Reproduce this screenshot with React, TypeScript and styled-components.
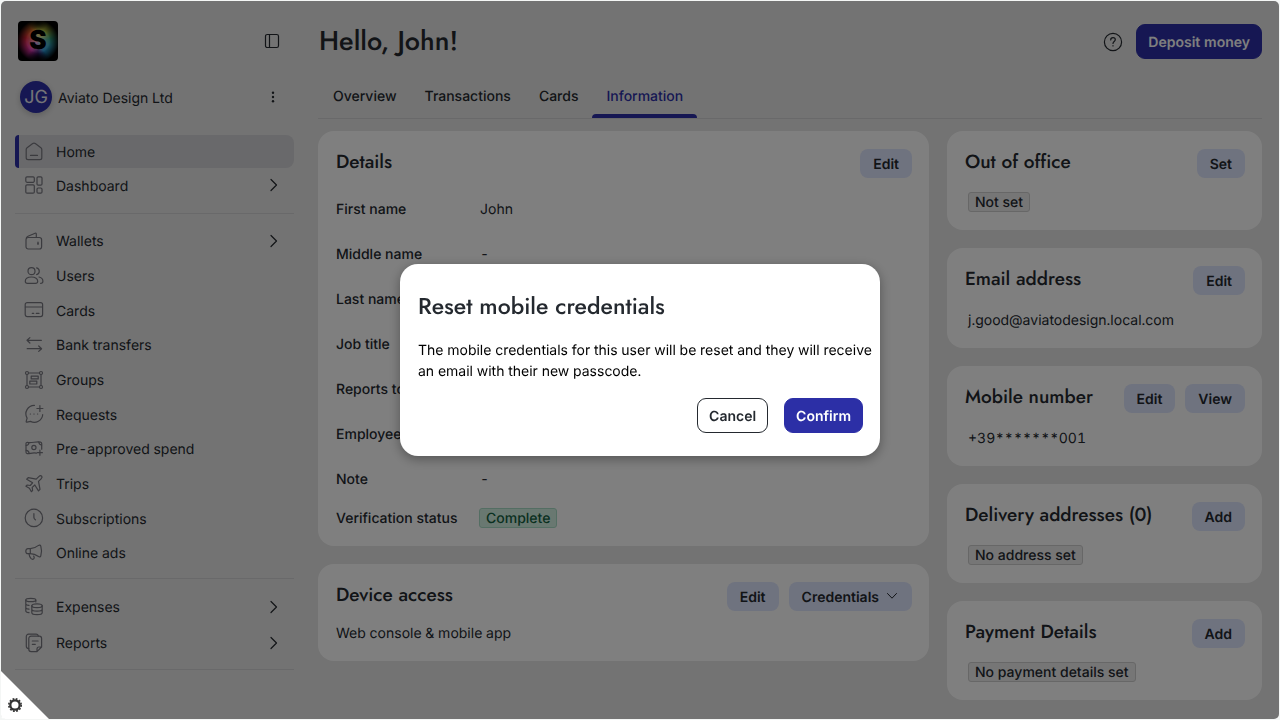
import React from "react";
import styled, { createGlobalStyle, css } from "styled-components";

const color = {
  ink: "#24292f",
  primary: "#2c2fa6",
  page: "#e7e7e7",
  card: "#ffffff",
  line: "#d2d2d4",
  soft: "#dfe6ff",
  icon: "#76767e",
};

const headingFont = `Jost, Futura, "Century Gothic", Lato, sans-serif`;

const GlobalStyle = createGlobalStyle`
  *, *::before, *::after { box-sizing: border-box; }
  body {
    margin: 0;
    background: #f4f6f5;
    color: ${color.ink};
    font-family: Inter, "Liberation Sans", sans-serif;
    font-size: 14px;
    line-height: 21px;
    font-variant-numeric: tabular-nums;
    text-rendering: geometricPrecision;
  }
  h1, h2, p, ul, dl, dd { margin: 0; padding: 0; }
  ul { list-style: none; }
  button { font: inherit; color: inherit; cursor: pointer; text-rendering: inherit; }
  a { color: inherit; text-decoration: none; }
`;

/* One line of body text, set low in its line box. */
const singleLine = css`
  padding-top: 2px;
  line-height: 19px;
`;

const Frame = styled.div`
  display: grid;
  grid-template-columns: 293px minmax(0, 1fr);
  column-gap: 24px;
  min-height: calc(100vh - 2px);
  margin: 1px;
  padding: 0 17px 0 0;
  border-radius: 5px;
  background: ${color.page};
`;

/* Sidebar */

const Sidebar = styled.aside`
  padding: 20px 0 0 14px;
`;

const BrandRow = styled.div`
  display: flex;
  align-items: center;
  justify-content: space-between;
  padding: 0 14px 0 3px;
`;

const Logo = styled.div`
  display: flex;
  align-items: center;
  justify-content: center;
  width: 40px;
  height: 40px;
  border-radius: 4px;
  color: #000;
  font-size: 26px;
  line-height: 40px;
  font-weight: 900;
  background:
    radial-gradient(circle at 50% 0%, #000 0%, transparent 22%),
    radial-gradient(circle at 50% 100%, #000 0%, transparent 26%),
    radial-gradient(circle at 50% 50%, transparent 40%, #000 74%),
    radial-gradient(circle at 50% 50%, rgba(255, 255, 255, 0.7) 0%, transparent 45%),
    conic-gradient(from 0deg, #c8c040, #a8b838 40deg, #30a080 80deg, #30a0b8 110deg, #2090d0 150deg, #50208c 180deg, #e030a8 220deg, #e02838 285deg, #e07028 330deg, #c8c040);
`;

const IconButton = styled.button`
  display: flex;
  padding: 0;
  border: 0;
  background: none;
`;

const AccountRow = styled.div`
  display: flex;
  align-items: center;
  gap: 6px;
  margin-top: 20px;
  padding: 0 14px 0 5px;
`;

const Avatar = styled.span`
  width: 32px;
  height: 32px;
  border-radius: 50%;
  background: ${color.primary};
  color: #e9e9ef;
  font-size: 18px;
  line-height: 33px;
  text-align: center;
  box-shadow: 0 2px 6px rgba(0, 0, 0, 0.2);
`;

const AccountName = styled.span`
  ${singleLine}
  flex: 1;
`;

const Nav = styled.nav`
  margin-top: 22px;
`;

const NavGroup = styled.ul<{ $height: number }>`
  display: flex;
  flex-direction: column;
  justify-content: space-between;
  min-height: ${(p) => p.$height}px;
`;

const Divider = styled.hr<{ $above: number; $below: number }>`
  height: 1px;
  margin: ${(p) => p.$above}px 0 ${(p) => p.$below}px;
  border: 0;
  background: ${color.line};
`;

const NavLink = styled.a<{ $active?: boolean; $tall?: boolean }>`
  display: flex;
  align-items: center;
  gap: 12px;
  height: ${(p) => (p.$tall ? 35 : 34)}px;
  padding: 0 14px 0 9px;
  ${(p) =>
    p.$active &&
    css`
      height: 33px;
      padding-left: 5px;
      border-left: 4px solid ${color.primary};
      border-radius: 4px 8px 8px 4px;
      background: #d3d3d6;
    `}
`;

const NavLabel = styled.span`
  ${singleLine}
  flex: 1;
`;

/* Main column */

const Main = styled.main`
  padding: 20px 0 18px;
`;

const PageHeader = styled.header`
  display: flex;
  align-items: center;
  justify-content: space-between;
  height: 41px;
`;

const PageTitle = styled.h1`
  padding: 0 0 1px 1px;
  font-family: ${headingFont};
  font-size: 27px;
  line-height: 39px;
  font-weight: 500;
`;

const HeaderActions = styled.div`
  display: flex;
  align-items: center;
  gap: 13px;
`;

const Button = styled.button<{ $kind?: "primary" | "outline" }>`
  height: 35px;
  padding: 1px 11px 0;
  border: 1px solid ${(p) => (p.$kind === "outline" ? color.ink : color.primary)};
  border-radius: 9px;
  background: ${(p) => (p.$kind === "outline" ? "#fff" : color.primary)};
  color: ${(p) => (p.$kind === "outline" ? color.ink : "#fff")};
  font-weight: 600;
`;

const SmallButton = styled.button`
  display: flex;
  align-items: center;
  gap: 6px;
  height: 29px;
  padding: 1px 13px 0;
  border: 0;
  border-radius: 8px;
  background: ${color.soft};
  font-weight: 600;
`;

const Tabs = styled.nav`
  display: flex;
  margin-top: 13px;
  padding-left: 1px;
  border-bottom: 1px solid ${color.line};
`;

const Tab = styled.a<{ $active?: boolean }>`
  position: relative;
  height: 43px;
  padding: 11px 14px 0;
  font-weight: 500;
  color: ${(p) => (p.$active ? color.primary : color.ink)};
  ${(p) =>
    p.$active &&
    css`
      &::after {
        content: "";
        position: absolute;
        inset: auto 0 0;
        height: 4px;
        border-radius: 4px 4px 0 0;
        background: ${color.primary};
      }
    `}
`;

const Content = styled.div`
  display: grid;
  grid-template-columns: minmax(0, 1fr) 315px;
  gap: 18px;
  align-items: start;
  margin-top: 12px;
`;

const Column = styled.div`
  display: grid;
  gap: 18px;
`;

const Card = styled.section<{ $tight?: boolean }>`
  padding: 18px 17px ${(p) => (p.$tight ? 12 : 18)}px 18px;
  border-radius: 16px;
  background: ${color.card};
`;

const CardHeader = styled.header`
  display: flex;
  align-items: center;
  justify-content: space-between;
  height: 29px;
`;

const CardTitle = styled.h2`
  padding-bottom: 1px;
  font-family: ${headingFont};
  font-size: 19px;
  line-height: 26px;
  font-weight: 500;
`;

const CardActions = styled.div`
  display: flex;
  gap: 10px;
`;

const CardBody = styled.div`
  margin-top: 14px;
  padding-left: 3px;
`;

const CardText = styled.p`
  ${singleLine}
`;

const DeviceText = styled.p`
  ${singleLine}
  margin-top: 11px;
`;

const Badge = styled.span<{ $good?: boolean }>`
  display: block;
  width: max-content;
  height: 20px;
  padding: 0 6px;
  border: 1px solid ${(p) => (p.$good ? "#a9dcc6" : "#cfcfcf")};
  border-radius: 3px;
  background: ${(p) => (p.$good ? "#d3f0e3" : "#ececec")};
  color: ${(p) => (p.$good ? "#146041" : color.ink)};
  line-height: 20px;
  font-weight: 500;
`;

const Fields = styled.dl`
  margin-top: 8px;
`;

const Field = styled.div<{ $short?: boolean }>`
  display: grid;
  grid-template-columns: 143px 1fr;
  align-items: center;
  height: ${(p) => (p.$short ? 33 : 45)}px;
`;

const FieldName = styled.dt`
  ${singleLine}
  font-weight: 500;
`;

const FieldValue = styled.dd`
  && {
    ${singleLine}
    padding-left: 1px;
  }
`;

/* Dialog */

const Overlay = styled.div`
  position: fixed;
  inset: 1px;
  display: flex;
  align-items: center;
  justify-content: center;
  border-radius: 5px;
  background: rgba(0, 0, 0, 0.5);
`;

const Dialog = styled.div`
  width: 480px;
  padding: 24px 0 23px 18px;
  border-radius: 18px;
  background: #fff;
  box-shadow: 0 3px 12px rgba(0, 0, 0, 0.35);
`;

const DialogTitle = styled.h2`
  font-family: ${headingFont};
  font-size: 23px;
  line-height: 36px;
  font-weight: 500;
`;

const DialogText = styled.p`
  margin-top: 16px;
  padding-right: 4px;
  color: #000;
`;

const DialogActions = styled.div`
  display: flex;
  justify-content: flex-end;
  gap: 16px;
  margin-top: 16px;
  padding-right: 17px;
`;

const Corner = styled.button`
  position: fixed;
  left: 1px;
  bottom: 1px;
  display: flex;
  align-items: flex-end;
  width: 48px;
  height: 48px;
  padding: 0 0 7px 7px;
  border: 0;
  border-radius: 0 0 0 4px;
  background: #fff;
  clip-path: polygon(0 0, 0 100%, 100% 100%);
`;

/* Icons */

const Glyph = styled.svg<{ $thin?: boolean }>`
  flex: none;
  display: block;
  fill: none;
  stroke: currentColor;
  stroke-width: ${(p) => (p.$thin ? 1 : 1.2)};
  stroke-linecap: round;
  stroke-linejoin: round;
`;

const NavGlyph = styled(Glyph)`
  color: ${color.icon};
`;

const icons: Record<string, React.ReactNode> = {
  home: (
    <>
      <path d="M2.2 7.6c0-.8.3-1.3.9-1.8l5.600-4.300c.8-.6 1.800-.6 2.600 0l5.600 4.300c.6.5.9 1 .9 1.800v8.100c0 1.100-.8 1.900-1.900 1.900H4.100c-1.100 0-1.900-.8-1.900-1.900z" />
      <path d="M6.500 13.400h7" />
    </>
  ),
  dashboard: (
    <>
      <rect x="1.800" y="1.800" width="8.500" height="5.500" rx="1.200" />
      <rect x="13" y="1.800" width="5" height="8.300" rx="1.200" />
      <rect x="1.800" y="9.800" width="8.500" height="8.400" rx="1.200" />
      <rect x="13" y="13" width="5" height="5.200" rx="1.200" />
    </>
  ),
  wallet: (
    <>
      <rect x="2" y="6.500" width="15.600" height="11.500" rx="2.200" />
      <path d="M2.300 7.200c.2-1 .8-1.600 1.700-2l7.100-2.900c.7-.3 1.200.1 1.200.8v3.300" />
      <path d="M14 11v2.400M13.600 12.200h.8" />
    </>
  ),
  users: (
    <>
      <circle cx="7.500" cy="5.200" r="3.500" />
      <path d="M1.300 15.200c0-2.500 2.300-4.200 6.200-4.200s6.200 1.700 6.200 4.200c0 1.400-.9 2.100-2.200 2.100h-8c-1.300 0-2.200-.7-2.200-2.100z" />
      <path d="M12.600 1.800a3.500 3.500 0 0 1 0 6.800M15 11c2.500.6 3.900 2.200 3.900 4.200 0 1.400-.8 2.100-2.300 2.100" />
    </>
  ),
  cards: (
    <>
      <rect x="1.200" y="2.600" width="17.400" height="14" rx="2" />
      <path d="M1.400 7h17M8.300 13.400h1.400M12.300 13.400h2.700" />
    </>
  ),
  transfers: <path d="M17.400 5.300H3.200m2.700-2.700L3 5.300 5.900 8M3.200 13.700h14.200m-2.700-2.700 2.900 2.700-2.900 2.700" />,
  groups: (
    <>
      <circle cx="3" cy="3" r="1.500" />
      <circle cx="17" cy="3" r="1.500" />
      <circle cx="3" cy="17" r="1.500" />
      <circle cx="17" cy="17" r="1.500" />
      <path d="M4.500 3h11M4.500 17h11M3 4.500v11M17 4.500v11" />
      <rect x="7.200" y="6.100" width="7" height="2.800" />
      <rect x="5.800" y="11.200" width="7" height="2.800" />
    </>
  ),
  requests: (
    <>
      <path d="M10.400 1.400a8.400 8.400 0 0 0-7.300 12.700l-.9 3.300c-.1.500.2.900.8.800l3.500-.8a8.500 8.500 0 0 0 12.200-6.700" />
      <path d="M15.900 1.500v6M12.900 4.500h6M6.300 10h.2M9.900 10h.2M13.500 10h.2" />
    </>
  ),
  spend: (
    <>
      <path d="M12.500 14.100c-4.500-1-6.700 1-9.300.5-.8-.1-1.200-.6-1.200-1.300V4.600c0-.9.600-1.300 1.500-1.200 4.500.9 8.800-1.300 13-.3.800.2 1.200.6 1.200 1.300v5.800" />
      <circle cx="9.900" cy="8.500" r="2.100" />
      <path d="M2.200 6.500C4 6.300 4.800 5.300 5 3.500M14.800 3c.2 1.800 1 2.800 2.800 3M2.200 11.400c1.800.1 2.700 1 3 2.900M15.900 11.200v5M13.400 13.700h5" />
    </>
  ),
  trips: <path d="M17.700 2.200c-.8-.7-2-.4-2.900.4l-2.600 2.500-8-1.500-1.500 1.600 5.900 3.600-2.400 2.700-3-.5-1.300 1.200 3.500 2 2 3.500 1.200-1.200-.4-3.100 2.600-2.400 3.700 5.900 1.500-1.500-1.500-8 2.600-2.600c.9-.9 1.300-1.900.6-2.600z" />,
  subs: (
    <>
      <circle cx="9.900" cy="9.900" r="8.700" />
      <path d="M9.900 5.700v3.600c0 .7.200 1 .6 1.500l1 1.100" />
    </>
  ),
  ads: (
    <>
      <path d="M6.300 5.600c3.500 0 6-1.400 8.200-3.200 1-.7 2-.2 2.300.8.9 3 .9 6.600 0 9.600-.3 1-1.300 1.500-2.300.8-2-1.500-4.700-3-8.200-3M6.300 5.600H4C2.600 5.600 1.800 6.700 1.800 8.200s.8 2.500 2.200 2.500l2.300-.1" />
      <path d="M6.300 5.600v5M5 10.800c.3 2.100 1 3.700 2.100 4.900.9.900 2.400.9 2.900-.2.500-1 .2-1.700-.3-2.400" />
    </>
  ),
  expenses: (
    <>
      <ellipse cx="6.800" cy="3" rx="5" ry="1.700" />
      <path d="M1.800 3v11c0 .9 1.200 1.500 3.200 1.700M1.800 6.700c0 .9 1.200 1.500 3.200 1.700M1.800 10.400c0 .9 1.200 1.500 3.200 1.700M11.800 3v2" />
      <ellipse cx="13" cy="8.700" rx="5.200" ry="1.900" />
      <path d="M7.800 8.700v7c0 1 2.200 1.900 5.200 1.900s5.200-.9 5.200-1.900v-7M7.800 12.200c0 1 2.200 1.900 5.200 1.900s5.200-.9 5.200-1.900" />
    </>
  ),
  reports: (
    <>
      <path d="M4.800 15.700c-1.500 0-2.500-.9-2.500-2.400V3.500c0-1.400.9-2.300 2.300-2.300H12c1.300 0 2.200.7 2.300 2" />
      <path d="M17.600 14v-8.500c0-1.400-.9-2.300-2.300-2.300H7.100c-1.400 0-2.300.9-2.300 2.300v10.800c0 1.400.9 2.300 2.300 2.300H13zM13 18.400v-2.500c0-1.200.7-1.900 1.900-1.900h2.600M8.300 8h5.800M8.300 11.300h3" />
    </>
  ),
};

const NavIcon = ({ name }: { name: string }) => (
  <NavGlyph width="20" height="20" viewBox="0 0 20 20" aria-hidden="true">
    {icons[name]}
  </NavGlyph>
);

const Chevron = () => (
  <Glyph width="13" height="14" viewBox="0 0 13 14" aria-hidden="true">
    <path d="M4 1.500 9.500 7 4 12.500" />
  </Glyph>
);

const ChevronDown = () => (
  <Glyph $thin width="14" height="14" viewBox="0 0 14 14" aria-hidden="true">
    <path d="M2.500 3.500 7 8.200l4.500-4.700" />
  </Glyph>
);

/* Data */

type NavItem = { label: string; icon: string; active?: boolean; more?: boolean };

const topItems: NavItem[] = [
  { label: "Home", icon: "home", active: true },
  { label: "Dashboard", icon: "dashboard", more: true },
];

const moneyItems: NavItem[] = [
  { label: "Wallets", icon: "wallet", more: true },
  { label: "Users", icon: "users" },
  { label: "Cards", icon: "cards" },
  { label: "Bank transfers", icon: "transfers" },
  { label: "Groups", icon: "groups" },
  { label: "Requests", icon: "requests" },
  { label: "Pre-approved spend", icon: "spend" },
  { label: "Trips", icon: "trips" },
  { label: "Subscriptions", icon: "subs" },
  { label: "Online ads", icon: "ads" },
];

const reportItems: NavItem[] = [
  { label: "Expenses", icon: "expenses", more: true },
  { label: "Reports", icon: "reports", more: true },
];

const fields = [
  ["First name", "John"],
  ["Middle name", "-"],
  ["Last name", ""],
  ["Job title", ""],
  ["Reports to", ""],
  ["Employee ID", ""],
  ["Note", "-"],
];

const NavItems = ({ items, height, tall }: { items: NavItem[]; height: number; tall?: boolean }) => (
  <NavGroup $height={height}>
    {items.map((item) => (
      <li key={item.label}>
        <NavLink
          href="#"
          $active={item.active}
          $tall={tall && item.more}
          aria-current={item.active ? "page" : undefined}
        >
          <NavIcon name={item.icon} />
          <NavLabel>{item.label}</NavLabel>
          {item.more && <Chevron />}
        </NavLink>
      </li>
    ))}
  </NavGroup>
);

const InfoCard = ({
  title,
  actions,
  children,
}: {
  title: string;
  actions: string[];
  children: React.ReactNode;
}) => (
  <Card>
    <CardHeader>
      <CardTitle>{title}</CardTitle>
      <CardActions>
        {actions.map((a) => (
          <SmallButton key={a} type="button">
            {a}
          </SmallButton>
        ))}
      </CardActions>
    </CardHeader>
    <CardBody>{children}</CardBody>
  </Card>
);

export default function App() {
  return (
    <>
      <GlobalStyle />
      <Frame>
        <Sidebar>
          <BrandRow>
            <Logo>S</Logo>
            <IconButton type="button" aria-label="Collapse sidebar">
              <Glyph width="16" height="16" viewBox="0 0 16 16">
                <rect x="1.500" y="1.500" width="13" height="13" rx="1.800" />
                <path d="M5.500 1.500v13" />
              </Glyph>
            </IconButton>
          </BrandRow>
          <AccountRow>
            <Avatar>JG</Avatar>
            <AccountName>Aviato Design Ltd</AccountName>
            <IconButton type="button" aria-label="Account menu">
              <svg width="14" height="14" viewBox="0 0 14 14" fill="currentColor">
                <circle cx="7" cy="2.800" r="1.200" />
                <circle cx="7" cy="7" r="1.200" />
                <circle cx="7" cy="11.200" r="1.200" />
              </svg>
            </IconButton>
          </AccountRow>
          <Nav aria-label="Main">
            <NavItems items={topItems} height={67} />
            <Divider $above={11} $below={9} />
            <NavItems items={moneyItems} height={347} tall />
            <Divider $above={8} $below={10} />
            <NavItems items={reportItems} height={71} tall />
            <Divider $above={9} $below={0} />
          </Nav>
        </Sidebar>

        <Main>
          <PageHeader>
            <PageTitle>Hello, John!</PageTitle>
            <HeaderActions>
              <IconButton type="button" aria-label="Help">
                <Glyph width="20" height="20" viewBox="0 0 20 20">
                  <circle cx="10" cy="10" r="8.600" />
                  <path d="M7.700 7.900c0-1.300 1-2.200 2.300-2.200s2.300.8 2.300 2c0 1.700-2.300 1.900-2.300 3.700M10 13.700v.3" />
                </Glyph>
              </IconButton>
              <Button type="button">Deposit money</Button>
            </HeaderActions>
          </PageHeader>

          <Tabs aria-label="Sections">
            <Tab href="#">Overview</Tab>
            <Tab href="#">Transactions</Tab>
            <Tab href="#">Cards</Tab>
            <Tab href="#" $active aria-current="page">
              Information
            </Tab>
          </Tabs>

          <Content>
            <Column>
              <Card $tight>
                <CardHeader>
                  <CardTitle>Details</CardTitle>
                  <SmallButton type="button">Edit</SmallButton>
                </CardHeader>
                <Fields>
                  {fields.map(([name, value]) => (
                    <Field key={name}>
                      <FieldName>{name}</FieldName>
                      <FieldValue>{value}</FieldValue>
                    </Field>
                  ))}
                  <Field $short>
                    <FieldName>Verification status</FieldName>
                    <dd>
                      <Badge $good>Complete</Badge>
                    </dd>
                  </Field>
                </Fields>
              </Card>
              <Card>
                <CardHeader>
                  <CardTitle>Device access</CardTitle>
                  <CardActions>
                    <SmallButton type="button">Edit</SmallButton>
                    <SmallButton type="button" aria-haspopup="menu">
                      Credentials
                      <ChevronDown />
                    </SmallButton>
                  </CardActions>
                </CardHeader>
                <DeviceText>Web console &amp; mobile app</DeviceText>
              </Card>
            </Column>

            <Column>
              <InfoCard title="Out of office" actions={["Set"]}>
                <Badge>Not set</Badge>
              </InfoCard>
              <InfoCard title="Email address" actions={["Edit"]}>
                <CardText>j.good@aviatodesign.local.com</CardText>
              </InfoCard>
              <InfoCard title="Mobile number" actions={["Edit", "View"]}>
                <CardText>+39*******001</CardText>
              </InfoCard>
              <InfoCard title="Delivery addresses (0)" actions={["Add"]}>
                <Badge>No address set</Badge>
              </InfoCard>
              <InfoCard title="Payment Details" actions={["Add"]}>
                <Badge>No payment details set</Badge>
              </InfoCard>
            </Column>
          </Content>
        </Main>
      </Frame>

      <Overlay>
        <Dialog role="dialog" aria-modal="true" aria-labelledby="reset-title">
          <DialogTitle id="reset-title">Reset mobile credentials</DialogTitle>
          <DialogText>
            The mobile credentials for this user will be reset and they will receive an email with
            their new passcode.
          </DialogText>
          <DialogActions>
            <Button type="button" $kind="outline">
              Cancel
            </Button>
            <Button type="button">Confirm</Button>
          </DialogActions>
        </Dialog>
      </Overlay>

      <Corner type="button" aria-label="Settings">
        <svg width="14" height="14" viewBox="0 0 14 14" fill="none" stroke="#333">
          <circle cx="7" cy="7" r="4.700" strokeWidth="2.300" />
          <circle cx="7" cy="7" r="6.200" strokeWidth="1.600" strokeDasharray="1.800 1.446" />
        </svg>
      </Corner>
    </>
  );
}
